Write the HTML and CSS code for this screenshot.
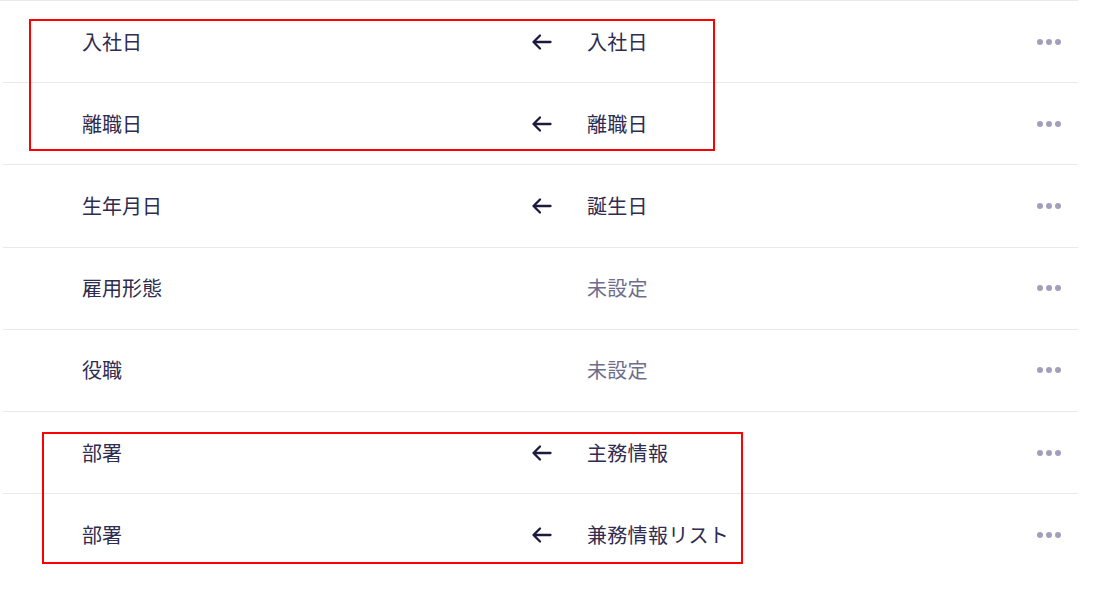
FILE: index.html
```html
<!DOCTYPE html>
<html>
<head>
    <title>項目マッピング</title>
    <link rel="stylesheet" href="styles.css">
</head>
<body>
    <div class="mapping">
        <div class="row">
            <span class="label">入社日</span>
            <span class="arrow"><svg width="22" height="22" viewBox="0 0 22 22"><path d="M19.5 11H2.5M9 4.5L2.5 11L9 17.5" fill="none" stroke="currentColor" stroke-width="2.3" stroke-linecap="round" stroke-linejoin="round"/></svg></span>
            <span class="value">入社日</span>
            <span class="more"><i></i><i></i><i></i></span>
        </div>
        <div class="row">
            <span class="label">離職日</span>
            <span class="arrow"><svg width="22" height="22" viewBox="0 0 22 22"><path d="M19.5 11H2.5M9 4.5L2.5 11L9 17.5" fill="none" stroke="currentColor" stroke-width="2.3" stroke-linecap="round" stroke-linejoin="round"/></svg></span>
            <span class="value">離職日</span>
            <span class="more"><i></i><i></i><i></i></span>
        </div>
        <div class="row">
            <span class="label">生年月日</span>
            <span class="arrow"><svg width="22" height="22" viewBox="0 0 22 22"><path d="M19.5 11H2.5M9 4.5L2.5 11L9 17.5" fill="none" stroke="currentColor" stroke-width="2.3" stroke-linecap="round" stroke-linejoin="round"/></svg></span>
            <span class="value">誕生日</span>
            <span class="more"><i></i><i></i><i></i></span>
        </div>
        <div class="row">
            <span class="label">雇用形態</span>
            <span class="arrow"></span>
            <span class="value unset">未設定</span>
            <span class="more"><i></i><i></i><i></i></span>
        </div>
        <div class="row">
            <span class="label">役職</span>
            <span class="arrow"></span>
            <span class="value unset">未設定</span>
            <span class="more"><i></i><i></i><i></i></span>
        </div>
        <div class="row">
            <span class="label">部署</span>
            <span class="arrow"><svg width="22" height="22" viewBox="0 0 22 22"><path d="M19.5 11H2.5M9 4.5L2.5 11L9 17.5" fill="none" stroke="currentColor" stroke-width="2.3" stroke-linecap="round" stroke-linejoin="round"/></svg></span>
            <span class="value">主務情報</span>
            <span class="more"><i></i><i></i><i></i></span>
        </div>
        <div class="row">
            <span class="label">部署</span>
            <span class="arrow"><svg width="22" height="22" viewBox="0 0 22 22"><path d="M19.5 11H2.5M9 4.5L2.5 11L9 17.5" fill="none" stroke="currentColor" stroke-width="2.3" stroke-linecap="round" stroke-linejoin="round"/></svg></span>
            <span class="value">兼務情報リスト</span>
            <span class="more"><i></i><i></i><i></i></span>
        </div>
    </div>
    <div class="highlight highlight-dates"></div>
    <div class="highlight highlight-dept"></div>
</body>
</html>
```

FILE: styles.css
```css
body {
    margin: 0;
    background: #fff;
    font-family: "Noto Sans CJK JP", "Noto Sans", sans-serif;
    font-size: 20px;
    color: #2e2c50;
}
.mapping {
    width: 1075px;
    margin-left: 3px;
}
.row {
    box-sizing: border-box;
    height: 82.2px;
    border-top: 1px solid #e9e9eb;
    display: grid;
    grid-template-columns: 451px 54px 1fr 24px;
    align-items: center;
    padding: 0 17px 0 79px;
}
.row:first-child {
    margin-left: -3px;
    padding-left: 82px;
}
.label, .value {
    line-height: 1;
    white-space: nowrap;
}
.value {
    letter-spacing: 0.3px;
}
.arrow {
    display: flex;
    align-items: center;
    color: #1c1a3f;
    margin-left: -2px;
}
.value.unset {
    color: #6f6d8c;
}
.more {
    display: flex;
    justify-content: space-between;
    width: 24px;
}
.more i {
    width: 6px;
    height: 6px;
    border-radius: 50%;
    background: #a29fbb;
}
.highlight {
    position: absolute;
    border: 2px solid #f00;
    box-sizing: border-box;
}
.highlight-dates {
    left: 29px;
    top: 19px;
    width: 686px;
    height: 132px;
}
.highlight-dept {
    left: 42px;
    top: 432px;
    width: 701px;
    height: 132px;
}
```
